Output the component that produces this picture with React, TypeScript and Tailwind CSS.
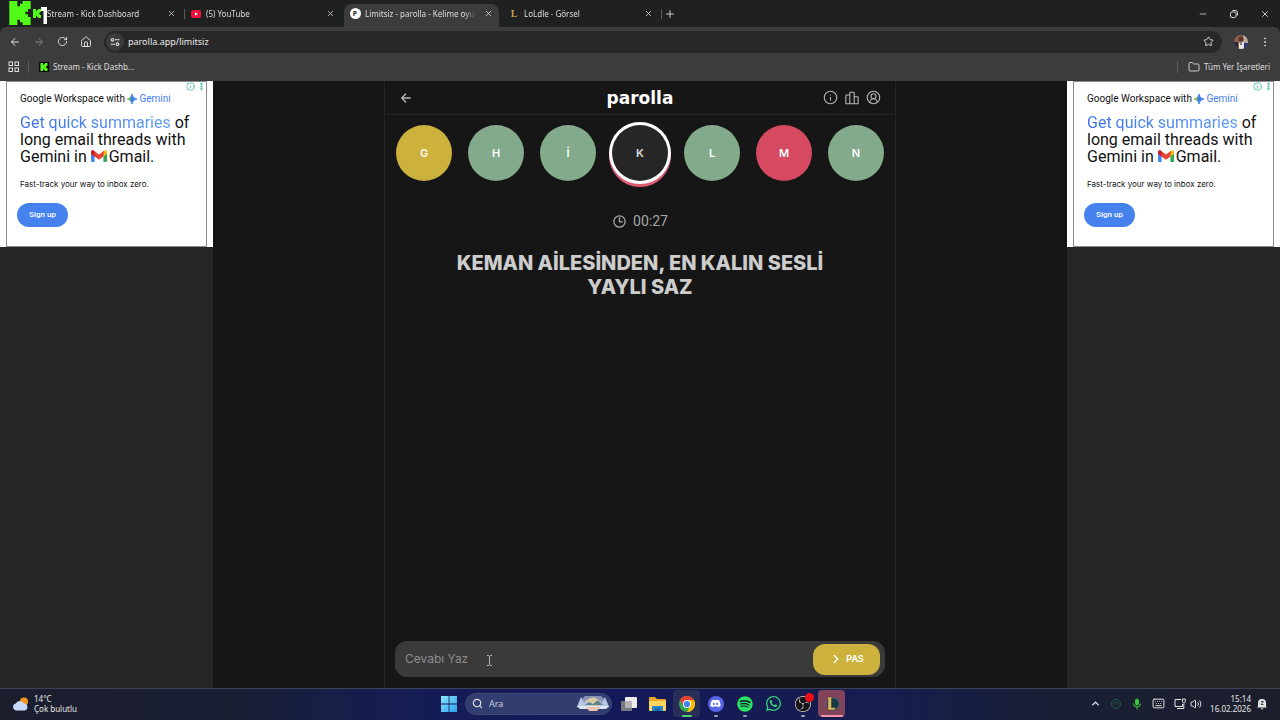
import type { ReactNode } from 'react'
import { ArrowLeft, ArrowRight, RotateCw, House, Star, Folder, X, Minus, Plus, Search, ChevronUp, ChevronRight, CircleUserRound, Keyboard, Volume2, EllipsisVertical, Info } from 'lucide-react'
import { IoArrowBack, IoPodiumOutline, IoTimeOutline } from 'react-icons/io5'
import { FaDiscord, FaSpotify, FaWhatsapp } from 'react-icons/fa'
import { SiObsstudio } from 'react-icons/si'

function KickLogo({ className }: { className?: string }) {
  return (
    <svg viewBox="1.3 0 21.4 24" className={className} fill="#53fc18">
      <path d="M1.333 0h8v5.333H12V2.667h2.667V0h8v8H20v2.667h-2.667v2.666H20V16h2.667v8h-8v-2.667H12v-2.666H9.333V24h-8Z" />
    </svg>
  )
}

function YoutubeIcon() {
  return (
    <svg viewBox="0 0 10 8" className="w-[10px] h-2">
      <rect width="10" height="8" rx="2" fill="#f0103c" />
      <path d="M4 2.3 7 4 4 5.7Z" fill="#fff" />
    </svg>
  )
}

function ParollaIcon() {
  return <span className="w-[11px] h-[11px] rounded-full bg-white text-[#222] text-[7px] leading-[11px] font-bold text-center">P</span>
}

function LoldleIcon() {
  return <span className="w-[10px] text-center font-['Liberation_Serif',serif] text-[10px] font-bold text-[#c2a052]">L</span>
}

interface TabProps {
  title: string
  icon: ReactNode
  active?: boolean
  divider?: boolean
}

function Tab({ title, icon, active, divider }: TabProps) {
  return (
    <div className="w-[159px] h-[23px] flex items-center">
      <div className={`flex-1 min-w-0 h-full flex items-center pl-[5px] pb-1 ${active ? 'bg-[#3c3c3c] rounded-t-lg mr-1 pr-[5px]' : 'pr-2'}`}>
        <span className="w-3 flex justify-center shrink-0">{icon}</span>
        <span className="ml-1 w-[111px] overflow-hidden whitespace-nowrap text-[8px] text-[#dedede] [mask-image:linear-gradient(to_right,#000_90%,transparent)]">{title}</span>
        <button aria-label={`Kapat: ${title}`} className="ml-auto w-3 h-3 flex items-center justify-center text-[#dedede]">
          <X className="w-[9px] h-[9px]" />
        </button>
        {divider && <span className="ml-[7px] -mr-2 w-px h-[10px] bg-[#5a5a5a]" />}
      </div>
    </div>
  )
}

function TabStrip() {
  return (
    <div className="h-[27px] pt-1 pl-[26px] pr-[10px] flex items-center bg-[#1f2020] relative">
      <Tab title="Stream - Kick Dashboard" icon={<KickLogo className="w-2 h-[9px]" />} divider />
      <Tab title="(5) YouTube" icon={<YoutubeIcon />} />
      <Tab title="Limitsiz - parolla - Kelime oyunu" icon={<ParollaIcon />} active />
      <Tab title="LoLdle - Görsel" icon={<LoldleIcon />} divider />
      <button aria-label="Yeni sekme" className="ml-0.5 mb-1 w-3 h-3 text-[#dedede]"><Plus className="w-3 h-3" strokeWidth={1.8} /></button>
      <div className="ml-auto pb-1 flex items-center gap-[21px] text-[#dedede]">
        <button aria-label="Küçült"><Minus className="w-[10px] h-[10px]" strokeWidth={1.8} /></button>
        <button aria-label="Önceki boyut">
          <svg viewBox="0 0 10 10" className="w-[10px] h-[10px]" fill="none" stroke="currentColor">
            <rect x="1.5" y="3" width="5.5" height="5.5" rx="1.4" />
            <path d="M3.5 1.5h3a2 2 0 0 1 2 2v3" />
          </svg>
        </button>
        <button aria-label="Pencereyi kapat"><X className="w-[10px] h-[10px]" /></button>
      </div>
      {/* stream overlay in the corner */}
      <KickLogo className="absolute left-[9px] top-px w-[22px] h-6" />
      <svg viewBox="0 0 6 17" className="absolute left-[41px] top-[7px] w-[6px] h-[17px]" fill="#fff">
        <path d="M0 0h6v17H2.500V4H0Z" />
      </svg>
    </div>
  )
}

function Toolbar() {
  return (
    <div className="bg-[#3c3c3c] text-[#dedede] rounded-t-md">
      <div className="h-[29px] flex items-center pl-[9px] pr-[9px]">
        <div className="flex items-center gap-3">
          <button aria-label="Geri"><ArrowLeft className="w-3 h-3" strokeWidth={2} /></button>
          <button aria-label="İleri" className="text-[#818181]"><ArrowRight className="w-3 h-3" strokeWidth={2} /></button>
          <button aria-label="Yenile"><RotateCw className="w-[11px] h-[11px]" /></button>
          <button aria-label="Ana sayfa"><House className="w-3 h-3" /></button>
        </div>
        <div className="ml-3 flex-1 h-[22px] rounded-full bg-[#282828] flex items-center pl-0.5 pr-2">
          <button aria-label="Site bilgileri" className="w-[18px] h-[18px] rounded-full bg-[#3c3c3c] flex items-center justify-center">
            <svg viewBox="0 0 10 10" className="w-[10px] h-[10px]" fill="none" stroke="currentColor" strokeWidth="1.1">
              <circle cx="2.5" cy="2.800" r="1.300" />
              <path d="M5 2.800h4.500M.5 7.200H5" />
              <circle cx="7.500" cy="7.200" r="1.300" />
            </svg>
          </button>
          <input aria-label="Adres" defaultValue="parolla.app/limitsiz" className="ml-1 flex-1 bg-transparent text-[9px] text-[#e8e8e8] outline-none" />
          <button aria-label="Yer işareti ekle"><Star className="w-[11px] h-[11px]" /></button>
        </div>
        <button aria-label="Profil" className="ml-3">
          <svg viewBox="0 0 14 14" className="w-[14px] h-[14px]">
            <clipPath id="avatar"><circle cx="7" cy="7" r="7" /></clipPath>
            <g clipPath="url(#avatar)">
              <rect width="14" height="14" fill="#8d5f50" />
              <path d="M0 7h4v7H0Z" fill="#242a35" />
              <path d="M9 0h5v8H9Z" fill="#b9a79c" />
              <path d="M10 8h4v6h-4Z" fill="#26357a" />
              <circle cx="7" cy="4" r="2.500" fill="#5a2d25" />
              <path d="M5 8l2-2 3 2v6H5Z" fill="#e9e6e2" />
              <path d="M6.500 6h1v4h-1Z" fill="#1c1c1c" />
            </g>
          </svg>
        </button>
        <button aria-label="Menü" className="ml-[11px]"><EllipsisVertical className="w-3 h-3" /></button>
      </div>
      <div className="h-[25px] pb-1 flex items-center pl-2 pr-2.5 text-[8px]">
        <button aria-label="Uygulamalar">
          <svg viewBox="0 0 11 11" className="w-[11px] h-[11px]" fill="none" stroke="currentColor">
            <rect x="1" y="1" width="3.500" height="3.500" />
            <rect x="7" y="1" width="3.500" height="3.500" />
            <rect x="1" y="7" width="3.500" height="3.500" />
            <rect x="7" y="7" width="3.500" height="3.500" />
          </svg>
        </button>
        <span className="ml-[9px] w-px h-3 bg-[#5c5c5c]" />
        <a href="#" className="ml-2.5 flex items-center gap-1">
          <span className="w-[10px] h-[10px] bg-black flex items-center justify-center"><KickLogo className="w-2 h-2" /></span>
          Stream - Kick Dashb...
        </a>
        <span className="ml-auto w-px h-3 bg-[#5c5c5c]" />
        <button className="ml-2.5 flex items-center gap-1"><Folder className="w-3 h-3" strokeWidth={1.8} />Tüm Yer İşaretleri</button>
      </div>
    </div>
  )
}

function GeminiStar({ id }: { id: string }) {
  return (
    <svg viewBox="0 0 10 10" className="inline-block w-[10px] h-[10px] mr-0.5">
      <linearGradient id={id}>
        <stop offset="0" stopColor="#f2b90f" />
        <stop offset=".25" stopColor="#4fae68" />
        <stop offset=".5" stopColor="#3b78ee" />
        <stop offset="1" stopColor="#3f86f6" />
      </linearGradient>
      <path d="M5 0Q5.500 4.500 10 5 5.500 5.500 5 10 4.500 5.500 0 5 4.500 4.500 5 0Z" fill={`url(#${id})`} stroke={`url(#${id})`} strokeWidth=".9" />
    </svg>
  )
}

function GmailIcon() {
  return (
    <svg viewBox="0 0 16 12" className="inline-block w-4 h-3 mr-0.5 align-baseline">
      <path d="M0 2h3.600v10H1a1 1 0 0 1-1-1Z" fill="#4285f4" />
      <path d="M12.400 2H16v9a1 1 0 0 1-1 1h-2.600Z" fill="#34a853" />
      <path d="M12.400 1.200 14 .2Q16 0 16 2v1.800l-3.600 2.700Z" fill="#fbbc04" />
      <path d="M0 3.800V2Q0-.3 2.500.4L8 4.600 13 .7l-.6 5.800L8 9.800 3.600 6.500Z" fill="#ea4335" />
      <path d="M0 3.800V2Q.2 0 2 .2l1.600 1v5.300Z" fill="#c5221f" />
    </svg>
  )
}

function Ad({ id }: { id: string }) {
  return (
    <aside className="bg-[#262626]">
      <div className="bg-white h-[166px] px-[6px] font-[Roboto,sans-serif] text-[#111]">
        <div className="relative h-full border border-[#8a8a8a] pl-[13px] pt-[10px]">
          <div className="absolute right-0 top-0 flex items-center text-[#35b3a6]">
            <Info className="w-[9px] h-[9px] mr-0.5" />
            <EllipsisVertical className="w-[9px] h-[9px]" strokeWidth={4} />
          </div>
          <p className="text-[10px] leading-[14px] whitespace-nowrap">
            Google Workspace with <GeminiStar id={id} /><span className="text-[#3f7df0]">Gemini</span>
          </p>
          <h2 className="mt-2 text-[16px] leading-[17px] whitespace-nowrap">
            <span className="bg-linear-to-r from-[#3b70e8] to-[#5d9df5] bg-clip-text text-transparent">Get quick summaries</span> of<br />
            long email threads with<br />
            Gemini in <GmailIcon />Gmail.
          </h2>
          <p className="mt-3 font-[Inter,sans-serif] text-[8px] leading-[14px] whitespace-nowrap">Fast-track your way to inbox zero.</p>
          <button className="-ml-[3px] mt-3 w-[51px] h-6 rounded-full bg-[#4682ee] text-white text-[8px] font-medium">Sign up</button>
        </div>
      </div>
    </aside>
  )
}

const letters = [
  { letter: 'G', state: 'passed' },
  { letter: 'H', state: 'correct' },
  { letter: 'İ', state: 'correct' },
  { letter: 'K', state: 'current' },
  { letter: 'L', state: 'correct' },
  { letter: 'M', state: 'wrong' },
  { letter: 'N', state: 'correct' },
]

const stateClass: Record<string, string> = {
  passed: 'bg-[#cdb13d] text-white font-semibold',
  correct: 'bg-[#82aa8b] text-white font-semibold',
  wrong: 'bg-[#d54a60] text-white font-semibold',
  current: 'bg-[#262626] text-[#cfcfcf] font-bold shadow-[0_0_0_3px_#fff,0_3px_0_3px_#dd5c72]',
}

function Game() {
  return (
    <main className="w-full max-w-[512px] mx-auto flex flex-col border-x border-[#242424] font-[Inter,sans-serif]">
      <header className="h-[34px] grid grid-cols-[1fr_auto_1fr] items-center px-[14px] border-b border-[#262626] text-[#b8b8b8]">
        <a href="#" aria-label="Geri"><IoArrowBack className="w-[14px] h-[14px]" /></a>
        <h1 className="font-['DejaVu_Sans',sans-serif] font-bold text-[17px] leading-5 text-white">parolla</h1>
        <div className="flex justify-end gap-[7px]">
          <button aria-label="Bilgi"><Info className="w-[15px] h-[15px]" strokeWidth={1.8} /></button>
          <button aria-label="İstatistik"><IoPodiumOutline className="w-[14px] h-[14px] [&_path]:[stroke-width:40]" /></button>
          <button aria-label="Hesap"><CircleUserRound className="w-[15px] h-[15px]" strokeWidth={1.8} /></button>
        </div>
      </header>

      {/* Letters */}
      <ul className="mt-[10px] flex justify-center gap-4">
        {letters.map(({ letter, state }) => (
          <li key={letter} className={`w-14 h-14 rounded-full flex items-center justify-center text-[11px] ${stateClass[state]}`}>
            {letter}
          </li>
        ))}
      </ul>

      <div className="mt-8 flex items-center justify-center gap-[6px] text-[#a6a6a6]">
        <IoTimeOutline className="w-[15px] h-[15px] [&_path]:[stroke-width:44]" />
        <span className="font-[Roboto,sans-serif] text-[14px] leading-4">00:27</span>
      </div>
      <p className="mt-[22px] px-12 text-center text-[20px] leading-6 font-extrabold text-[#cdcdcd]">
        KEMAN AİLESİNDEN, EN KALIN SESLİ YAYLI SAZ
      </p>

      {/* Answer */}
      <form className="mt-auto mx-[10px] mb-[11px] h-9 rounded-xl bg-[#3a3a3a] flex items-center pl-[10px] pr-[5px] relative" onSubmit={(e) => e.preventDefault()}>
        <input aria-label="Cevap" placeholder="Cevabı Yaz" className="flex-1 bg-transparent text-[12px] text-white placeholder:text-[#8d8d8d] outline-none" />
        <button className="w-[67px] h-[31px] rounded-xl bg-[#cdb13d] text-white text-[9px] font-semibold flex items-center justify-center gap-[3px]">
          <ChevronRight className="w-[14px] h-[14px]" strokeWidth={2.5} />PAS
        </button>
        <svg viewBox="0 0 5 11" className="absolute left-[92px] top-[14px] w-[5px] h-[11px]" fill="none" stroke="#b5b5b5">
          <path d="M0 .5h2M3 .5h2M2.500 1v9M0 10.500h2M3 10.500h2" />
        </svg>
      </form>
    </main>
  )
}

function WindowsLogo() {
  return (
    <svg viewBox="0 0 16 16" className="w-4 h-4">
      <linearGradient id="win" x2="1" y2="1">
        <stop offset="0" stopColor="#8be6fb" />
        <stop offset="1" stopColor="#2aa2ee" />
      </linearGradient>
      <path d="M0 0h7.600v7.600H0ZM8.400 0H16v7.600H8.400ZM0 8.400h7.600V16H0ZM8.400 8.400H16V16H8.400Z" fill="url(#win)" />
    </svg>
  )
}

function SearchArt() {
  return (
    <svg viewBox="0 0 32 17" className="w-8 h-[17px]">
      <path d="M2 7 8 1h16l6 6 2 5-5 2H5l-5-2Z" fill="#8792b6" />
      <path d="M8 7q8-9 16 0v4H8Z" fill="#d9c9a0" />
      <path d="M0 12 4 2l3 6 2-3 4 7ZM20 12l3-7 2 3 3-6 4 10Z" fill="#b9c6e6" />
      <path d="M8 10l4-3 4 2 5-4 5 5Z" fill="#5e8390" />
      <path d="M0 11h32l-3 3H3Z" fill="#dde4f4" />
      <path d="M9 12h14l-3 4h-8Z" fill="#e9c3ae" />
    </svg>
  )
}

function TaskViewIcon() {
  return (
    <svg viewBox="0 0 16 16" className="w-4 h-4">
      <rect x="4" y="1" width="12" height="11" rx="1" fill="#ececec" />
      <rect x="0" y="5" width="11" height="10" rx="1" fill="#777b80" />
      <path d="M4 5h7v7H4Z" fill="#b4b4b4" />
    </svg>
  )
}

function ExplorerIcon() {
  return (
    <svg viewBox="0 0 17 16" className="w-[17px] h-4">
      <path d="M0 2q0-1 1-1h5l2 2h8q1 0 1 1v10H0Z" fill="#e4a62b" />
      <path d="M0 5h17v9q0 1-1 1H1q-1 0-1-1Z" fill="#fbd65f" />
      <path d="M3 15v-4q0-1 1-1h9q1 0 1 1v4Z" fill="#2583cf" />
      <path d="M6 12h5v3H6Z" fill="#1868a8" />
    </svg>
  )
}

function ChromeIcon() {
  return (
    <svg viewBox="0 0 16 16" className="w-4 h-4">
      <circle cx="8" cy="8" r="8" fill="#35a853" />
      <path d="M8 8 1.070 4A8 8 0 0 1 14.930 4Z" fill="#e94235" />
      <path d="M8 4h6.930A8 8 0 0 1 8 16l3.400-6Z" fill="#fbbc05" />
      <path d="M1.070 4 4.600 10 8 4Z" fill="#e94235" />
      <circle cx="8" cy="8" r="4" fill="#fff" />
      <circle cx="8" cy="8" r="3.100" fill="#3f83ef" />
    </svg>
  )
}

function LeagueIcon() {
  return (
    <svg viewBox="0 0 16 16" className="w-4 h-4">
      <circle cx="9" cy="8" r="6" fill="#173a44" stroke="#2b6e78" />
      <path d="M3 1h5L7.500 3v8.500H12L10.500 14H3l1-2V3Z" fill="#d8b969" stroke="#3a2b17" strokeWidth=".5" />
    </svg>
  )
}

interface TaskProps {
  name: string
  children: ReactNode
  tile?: string
  mark?: string
}

function Task({ name, children, tile = '', mark }: TaskProps) {
  return (
    <button aria-label={name} className={`relative w-[27px] h-[27px] mx-px rounded-sm flex items-center justify-center ${tile}`}>
      {children}
      {mark && <span className={`absolute bottom-0 left-1/2 -translate-x-1/2 h-0.5 rounded-full ${mark}`} />}
    </button>
  )
}

function Taskbar() {
  return (
    <footer className="h-8 pb-0.5 shrink-0 grid grid-cols-[1fr_auto_1fr] items-center border-t border-[#3c4257] bg-[linear-gradient(to_right,#1b1e2d_0%,#1b1f34_18%,#151d55_32%,#14195a_48%,#171d50_68%,#1a1f36_82%,#1b1e2b_100%)] text-[#e6e6e6] text-[8px]">
      <div className="pl-3 flex items-center gap-[5px]">
        <svg viewBox="0 0 17 14" className="w-[17px] h-[14px]">
          <circle cx="12" cy="4.500" r="4" fill="#f39a1e" />
          <path d="M4 13.500a3.600 3.600 0 0 1-.3-7A4.600 4.600 0 0 1 12 6.500a3.600 3.600 0 0 1 1 7Z" fill="#c7dbf6" />
        </svg>
        <div className="leading-[10px]">
          <p>14°C</p>
          <p>Çok bulutlu</p>
        </div>
      </div>

      <div className="flex items-center">
        <Task name="Başlat"><WindowsLogo /></Task>
        <label className="ml-0.5 mr-0.5 w-[147px] h-[22px] rounded-full bg-[#323d70] border border-[#3e4977] flex items-center pl-[6px] pr-0.5">
          <Search className="w-[11px] h-[11px]" strokeWidth={2.5} />
          <input aria-label="Ara" placeholder="Ara" className="ml-1.5 flex-1 min-w-0 bg-transparent text-[9px] placeholder:text-[#c9cde0] outline-none" />
          <SearchArt />
        </label>
        <Task name="Görev görünümü"><TaskViewIcon /></Task>
        <Task name="Dosya Gezgini"><ExplorerIcon /></Task>
        <Task name="Chrome" tile="bg-[#282e58]" mark="w-[10px] bg-[#4fd66a]"><ChromeIcon /></Task>
        <Task name="Discord" mark="w-1 bg-[#9aa0b8]">
          <span className="w-4 h-4 rounded-full bg-[#5865e6] flex items-center justify-center"><FaDiscord className="w-[11px] h-[11px] text-white" /></span>
        </Task>
        <Task name="Spotify" mark="w-1 bg-[#9aa0b8]">
          <span className="w-4 h-4 rounded-full bg-[#10182a]"><FaSpotify className="w-4 h-4 text-[#2be066]" /></span>
        </Task>
        <Task name="WhatsApp"><FaWhatsapp className="w-[17px] h-[17px] text-[#35d97c]" /></Task>
        <Task name="OBS" mark="w-1 bg-[#9aa0b8]">
          <span className="w-4 h-4 rounded-full bg-[#15151a]"><SiObsstudio className="w-4 h-4 text-[#d7d7d7]" /></span>
          <span className="absolute right-0.5 top-[3px] w-[9px] h-[9px] rounded-full bg-[#ee0d16]" />
        </Task>
        <Task name="League of Legends" tile="bg-[#81445a]" mark="w-[22px] bg-[#f593a9]"><LeagueIcon /></Task>
      </div>

      <div className="pr-[13px] flex items-center justify-end">
        <div className="flex items-center gap-[9px] mr-[6px]">
          <ChevronUp className="w-[11px] h-[11px]" strokeWidth={3} />
          <svg viewBox="0 0 12 12" className="w-3 h-3" fill="none" stroke="#1f5a45">
            <circle cx="6" cy="6" r="4.500" />
            <path d="M4 7a2.200 2.200 0 1 1 3 1" />
          </svg>
          <svg viewBox="0 0 12 12" className="w-3 h-3" fill="none" stroke="#39c93c">
            <rect x="4.500" y="1" width="3" height="6" rx="1.500" fill="#39c93c" />
            <path d="M2.500 5.500a3.500 3.500 0 0 0 7 0M6 9v2.500" />
          </svg>
          <Keyboard className="w-[13px] h-[13px]" strokeWidth={1.8} />
          <div className="flex items-center gap-1">
            <svg viewBox="0 0 12 12" className="w-3 h-3" fill="none" stroke="currentColor">
              <path d="M7 1.500H1v7h7.500V6M3 10.500h5.500M9.800 6v4.500H8" />
              <path d="M8.500 1h2.800v2.500q0 1.500-1.400 1.500T8.500 3.500Z" />
            </svg>
            <Volume2 className="w-3 h-3" />
          </div>
        </div>
        <time className="w-[43px] leading-[10px] whitespace-nowrap flex flex-col items-end">
          <span>15:14</span>
          <span>16.02.2026</span>
        </time>
        <svg viewBox="0 0 10 12" className="ml-[6px] w-[10px] h-3" fill="#e6e6e6">
          <path d="M1 8.500V5a4 4 0 0 1 8 0v3.500L10 9.500H0ZM3.500 10.200h3L5 11.700Z" />
          <path d="M4 3.500h2.500L4 6.500h2.500" fill="none" stroke="#1b1e2b" strokeWidth=".8" />
        </svg>
      </div>
    </footer>
  )
}

export default function App() {
  return (
    <div className="min-h-screen flex flex-col bg-[#1f2020] font-['Noto_Sans',sans-serif]">
      <TabStrip />
      <Toolbar />
      <div className="flex-1 grid grid-cols-[213px_1fr_213px] bg-[#161616]">
        <Ad id="gem-left" />
        <Game />
        <Ad id="gem-right" />
      </div>
      <Taskbar />
    </div>
  )
}
